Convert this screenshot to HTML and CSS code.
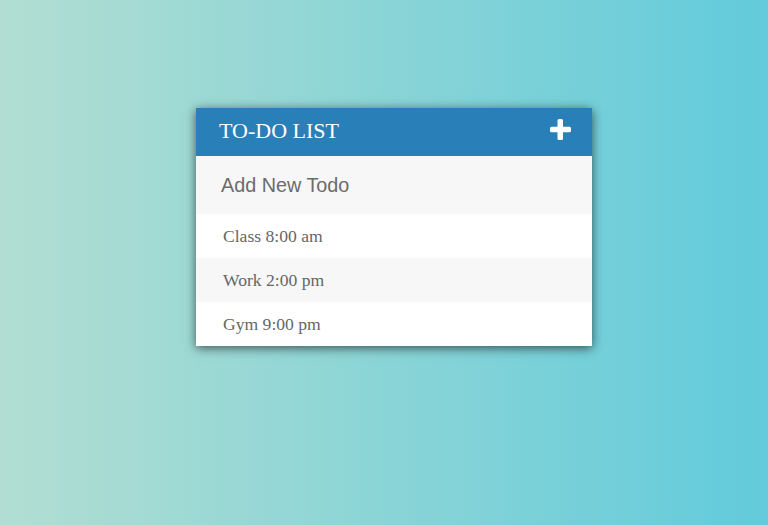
FILE: index.html
```html
<!DOCTYPE html>
<html>
<head>
<meta charset="utf-8">
<link rel="stylesheet" href="styles.css">
</head>
<body>
<div class="page">
  <div class="card">
    <div class="header">
      <h1 class="title">To-Do List</h1>
      <svg class="plus" width="21" height="21" viewBox="0 0 21 21">
        <rect x="7.5" y="0" width="5.5" height="21" rx="1.5" fill="#fff"/>
        <rect x="0" y="7.8" width="21" height="5.5" rx="1.5" fill="#fff"/>
      </svg>
    </div>
    <div class="new">Add New Todo</div>
    <ul class="list">
      <li class="item">Class 8:00 am</li>
      <li class="item alt">Work 2:00 pm</li>
      <li class="item">Gym 9:00 pm</li>
    </ul>
  </div>
</div>
</body>
</html>
```
FILE: styles.css
```css
html, body {
  margin: 0;
  padding: 0;
  height: 100%;
}
body {
  background: linear-gradient(to right, #b2ded2, #62cbdb);
}
.page {
  display: flex;
  justify-content: center;
  padding-top: 108px;
  padding-left: 20px;
}
.card {
  width: 396px;
  background: #fff;
  box-shadow: 0 2px 10px rgba(0, 0, 0, 0.62);
}
.header {
  height: 48px;
  background: #2980b9;
  display: flex;
  align-items: center;
  justify-content: space-between;
  padding: 0 21px 0 23px;
}
.title {
  margin: 0;
  font-family: "Liberation Serif", "Times New Roman", serif;
  font-weight: normal;
  font-size: 22px;
  text-transform: uppercase;
  color: #fff;
  position: relative;
  top: -1px;
}
.plus {
  display: block;
  position: relative;
  top: -3px;
}
.new {
  height: 58px;
  background: #f7f7f7;
  font-family: "Liberation Sans", Arial, sans-serif;
  font-size: 19.8px;
  color: #6b6b6b;
  display: flex;
  align-items: center;
  padding-left: 25px;
}
.list {
  list-style: none;
  margin: 0;
  padding: 0;
}
.item {
  height: 44px;
  display: flex;
  align-items: center;
  padding-left: 27px;
  font-family: "Liberation Serif", "Times New Roman", serif;
  font-size: 17.6px;
  color: #666;
  background: #fff;
}
.item.alt {
  background: #f7f7f7;
}
```
